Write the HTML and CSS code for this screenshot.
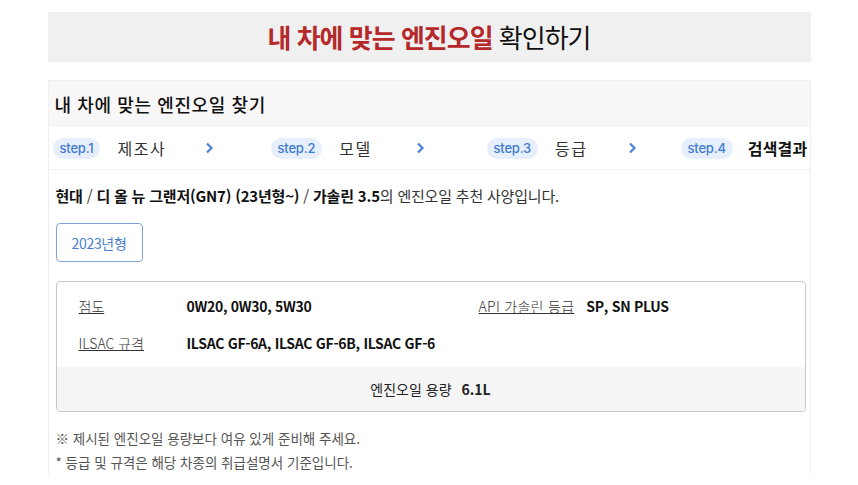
FILE: index.html
```html
<!DOCTYPE html>
<html lang="ko">
<head>
    <meta charset="UTF-8">
    <title>내 차에 맞는 엔진오일 확인하기</title>
    <link rel="stylesheet" href="styles.css">
</head>
<body>
    <div class="page">
        <h1 class="title"><strong>내 차에 맞는 엔진오일</strong> 확인하기</h1>

        <div class="card">
            <div class="card-head">내 차에 맞는 엔진오일 찾기</div>

            <div class="steps">
                <div class="step">
                    <span class="badge">step.1</span>
                    <span class="step-name">제조사</span>
                    <svg class="chev" width="9" height="12" viewBox="0 0 9 12"><path d="M2 1.5 L6.5 6 L2 10.5" fill="none" stroke="#4a82d6" stroke-width="2.2"/></svg>
                </div>
                <div class="step">
                    <span class="badge">step.2</span>
                    <span class="step-name">모델</span>
                    <svg class="chev" width="9" height="12" viewBox="0 0 9 12"><path d="M2 1.5 L6.5 6 L2 10.5" fill="none" stroke="#4a82d6" stroke-width="2.2"/></svg>
                </div>
                <div class="step">
                    <span class="badge">step.3</span>
                    <span class="step-name">등급</span>
                    <svg class="chev" width="9" height="12" viewBox="0 0 9 12"><path d="M2 1.5 L6.5 6 L2 10.5" fill="none" stroke="#4a82d6" stroke-width="2.2"/></svg>
                </div>
                <div class="step last">
                    <span class="badge">step.4</span>
                    <span class="step-name current">검색결과</span>
                </div>
            </div>

            <div class="card-body">
                <p class="summary"><b>현대</b> / <b>디 올 뉴 그랜저(GN7) (23년형~)</b> / <b>가솔린 3.5</b>의 엔진오일 추천 사양입니다.</p>

                <button class="year-btn">2023년형</button>

                <div class="spec">
                    <div class="spec-rows">
                        <div class="spec-item">
                            <a class="spec-label">점도</a>
                            <span class="spec-value">0W20, 0W30, 5W30</span>
                        </div>
                        <div class="spec-item api">
                            <a class="spec-label">API 가솔린 등급</a>
                            <span class="spec-value">SP, SN PLUS</span>
                        </div>
                        <div class="spec-item wide">
                            <a class="spec-label">ILSAC 규격</a>
                            <span class="spec-value">ILSAC GF-6A, ILSAC GF-6B, ILSAC GF-6</span>
                        </div>
                    </div>
                    <div class="capacity">엔진오일 용량 <b>6.1L</b></div>
                </div>

                <ul class="notes">
                    <li>※ 제시된 엔진오일 용량보다 여유 있게 준비해 주세요.</li>
                    <li>* 등급 및 규격은 해당 차종의 취급설명서 기준입니다.</li>
                </ul>
            </div>
        </div>
    </div>
</body>
</html>
```

FILE: styles.css
```css
body {
    margin: 0;
    background: #fff;
    font-family: "Noto Sans CJK KR", "Noto Sans", sans-serif;
    color: #222;
}

.page {
    width: 763px;
    margin: 0 auto;
    padding-top: 12px;
}

.title {
    margin: 0;
    height: 50px;
    line-height: 50px;
    background: #f0f0f0;
    text-align: center;
    font-size: 26px;
    font-weight: 400;
    letter-spacing: -1px;
    color: #111;
}

.title strong {
    color: #b5292b;
    font-weight: 700;
}

.card {
    margin-top: 18px;
    border: 1px solid #f0f0f0;
    border-bottom: none;
}

.card-head {
    height: 46px;
    line-height: 46px;
    padding-left: 6px;
    background: #f7f7f7;
    font-size: 18px;
    font-weight: 500;
    letter-spacing: 0.6px;
    color: #111;
}

.steps {
    display: flex;
    height: 42px;
    align-items: center;
    padding-left: 4px;
    border-bottom: 1px solid #eee;
}

.step {
    display: flex;
    align-items: center;
    width: 218px;
    white-space: nowrap;
}

.step:nth-child(2) {
    width: 216px;
}

.step:nth-child(3) {
    width: 194px;
}

.step.last {
    width: auto;
}

.badge {
    display: inline-block;
    padding: 0 7px;
    height: 21px;
    line-height: 21px;
    border-radius: 11px;
    background: #e6effb;
    color: #3f7bd0;
    font-family: "Inter", "Noto Sans", sans-serif;
    font-size: 13px;
    font-weight: 500;
    letter-spacing: -0.2px;
}

.step-name {
    margin-left: 17px;
    font-size: 16px;
    color: #333;
    letter-spacing: 1.5px;
}

.step-name.current {
    font-weight: 700;
    color: #111;
    letter-spacing: 0.2px;
    margin-left: 15px;
}

.chev {
    margin-left: auto;
    margin-right: 57px;
}

.step:nth-child(2) .chev {
    margin-right: 62px;
}

.step:nth-child(3) .chev {
    margin-right: 44px;
}

.card-body {
    padding: 15px 4px 0 7px;
}

.summary {
    margin: 0;
    font-size: 15px;
    color: #333;
    letter-spacing: -0.2px;
}

.summary b {
    color: #111;
    font-weight: 700;
}

.year-btn {
    margin-top: 17px;
    width: 87px;
    height: 39px;
    background: #fff;
    border: 1px solid #7fa3d8;
    border-radius: 4px;
    color: #4a7fd0;
    font-family: inherit;
    font-size: 14px;
    letter-spacing: -0.3px;
}

.spec {
    margin-top: 19px;
    border: 1px solid #c8c8c8;
    border-radius: 4px;
    overflow: hidden;
}

.spec-rows {
    display: grid;
    grid-template-columns: 400px 1fr;
    row-gap: 17px;
    padding: 14px 0 14px 22px;
}

.spec-item {
    display: flex;
    align-items: center;
    height: 20px;
    white-space: nowrap;
}

.spec-item.wide {
    grid-column: 1 / 3;
}

.spec-label {
    width: 108px;
    font-size: 14px;
    font-weight: 300;
    color: #333;
    text-decoration: underline;
    letter-spacing: 0;
}

.spec-item.api .spec-label {
    width: auto;
    margin-right: 12px;
    letter-spacing: 0.3px;
}

.spec-value {
    font-size: 14px;
    font-weight: 700;
    color: #111;
    letter-spacing: -0.3px;
}

.capacity {
    height: 44px;
    line-height: 44px;
    background: #f5f5f5;
    text-align: center;
    font-size: 14px;
    color: #222;
}

.capacity b {
    margin-left: 6px;
}

.notes {
    list-style: none;
    margin: 14px 0 0;
    padding: 0;
    font-size: 13.5px;
    color: #555;
    line-height: 24px;
    letter-spacing: 0;
}
```
